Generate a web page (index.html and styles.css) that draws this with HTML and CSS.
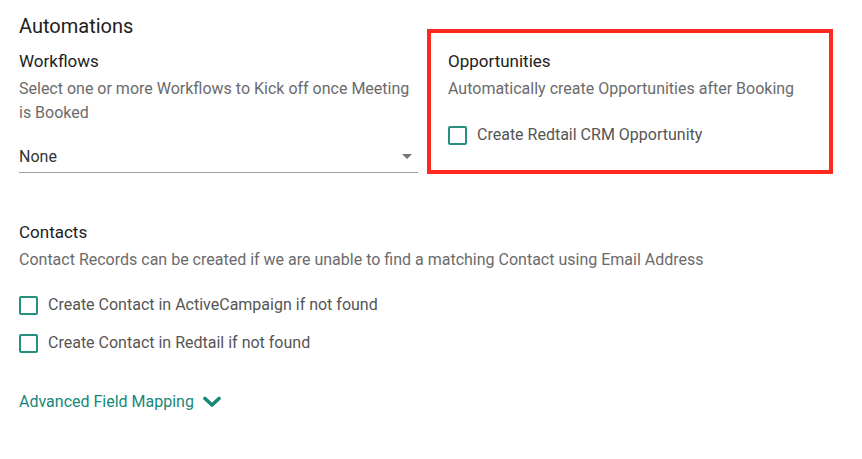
FILE: index.html
```html
<!DOCTYPE html>
<html>
<head>
<meta charset="utf-8">
<link rel="stylesheet" href="styles.css">
</head>
<body>
<div class="page">
  <div class="top">
    <div class="left">
      <h1 class="title">Automations</h1>
      <h2 class="section-title">Workflows</h2>
      <p class="desc">Select one or more Workflows to Kick off once Meeting is Booked</p>
      <div class="select">
        <span class="select-value">None</span>
        <span class="select-arrow"></span>
      </div>
    </div>
    <div class="highlight">
      <h2 class="section-title">Opportunities</h2>
      <p class="desc">Automatically create Opportunities after Booking</p>
      <label class="check"><span class="box"></span><span class="check-label">Create Redtail CRM Opportunity</span></label>
    </div>
  </div>
  <div class="contacts">
    <h2 class="section-title">Contacts</h2>
    <p class="desc">Contact Records can be created if we are unable to find a matching Contact using Email Address</p>
    <div class="checks">
      <label class="check"><span class="box"></span><span class="check-label">Create Contact in ActiveCampaign if not found</span></label>
      <label class="check"><span class="box"></span><span class="check-label">Create Contact in Redtail if not found</span></label>
    </div>
  </div>
  <a class="advanced">Advanced Field Mapping
    <svg class="chev" width="18" height="12" viewBox="0 0 18 12"><path d="M2 2.5 L9 9 L16 2.5" fill="none" stroke="currentColor" stroke-width="3.6" stroke-linecap="round" stroke-linejoin="round"/></svg>
  </a>
</div>
</body>
</html>
```
FILE: styles.css
```css
* { box-sizing: border-box; }
html, body { margin: 0; padding: 0; background: #fff; }
body { font-family: Roboto, "Noto Sans", sans-serif; color: #212121; }
.page { padding: 12px 19px 0 19px; }
.top { display: flex; align-items: flex-start; gap: 9px; }
.left { width: 399px; }
.title { font-size: 20px; font-weight: 400; line-height: 28px; margin: 0 0 9px 0; color: #212121; }
.section-title { font-size: 17px; font-weight: 400; line-height: 24px; margin: 0 0 4px 0; color: #212121; }
.desc { font-size: 16px; line-height: 24px; color: #6b6b6b; margin: 0; }
.select { margin-top: 17px; height: 31px; border-bottom: 1px solid #9e9e9e; display: flex; align-items: center; justify-content: space-between; padding-bottom: 2px; }
.select-value { font-size: 16px; color: #333; }
.select-arrow { width: 0; height: 0; border-left: 5px solid transparent; border-right: 5px solid transparent; border-top: 5px solid #757575; margin-right: 6px; }
.highlight { margin-top: 17px; width: 406px; height: 145px; border: 4px solid #ff2a1f; padding: 16px 16px 0 17px; }
.check { display: flex; align-items: center; gap: 10px; font-size: 16px; color: #555; height: 24px; }
.box { width: 19px; height: 19px; border: 2px solid #26907f; border-radius: 2px; flex: none; }
.highlight .check { margin-top: 22px; }
.contacts { margin-top: 46px; }
.checks { margin-top: 21px; display: flex; flex-direction: column; gap: 14px; }
.check-label { line-height: 24px; }
.advanced { display: inline-flex; align-items: center; gap: 9px; margin-top: 37px; font-size: 16px; color: #17877a; }
.chev { display: block; }
```
